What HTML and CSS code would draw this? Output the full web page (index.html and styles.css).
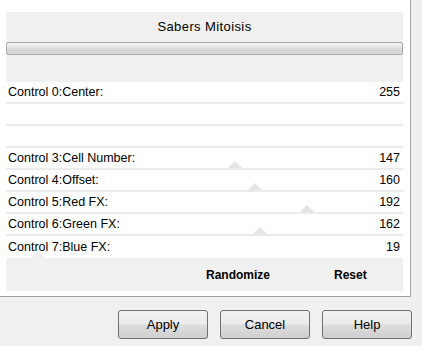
FILE: index.html
```html
<!DOCTYPE html>
<html>
<head>
<meta charset="utf-8">
<link rel="stylesheet" href="styles.css">
</head>
<body>
<div class="main">
  <div class="panel">
    <div class="header">
      <div class="title">Sabers Mitoisis</div>
      <div class="progress"></div>
    </div>
    <div class="rows">
      <div class="row"><span class="label">Control 0:Center:</span><span class="val">255</span></div>
      <div class="row"></div>
      <div class="row"></div>
      <div class="row"><span class="label">Control 3:Cell Number:</span><span class="val">147</span><i class="thumb" style="left:222px"></i></div>
      <div class="row"><span class="label">Control 4:Offset:</span><span class="val">160</span><i class="thumb" style="left:242px"></i></div>
      <div class="row"><span class="label">Control 5:Red FX:</span><span class="val">192</span><i class="thumb" style="left:294px"></i></div>
      <div class="row"><span class="label">Control 6:Green FX:</span><span class="val">162</span><i class="thumb" style="left:247px"></i></div>
      <div class="row last"><span class="label">Control 7:Blue FX:</span><span class="val">19</span><i class="thumb faint" style="left:25px"></i></div>
    </div>
    <div class="footer">
      <span class="fbtn">Randomize</span>
      <span class="fbtn">Reset</span>
    </div>
  </div>
</div>
<div class="buttons">
  <button class="btn">Apply</button>
  <button class="btn">Cancel</button>
  <button class="btn">Help</button>
</div>
</body>
</html>
```
FILE: styles.css
```css
html, body {
  margin: 0;
  padding: 0;
}
body {
  background: #f0f0f0;
  font-family: "Liberation Sans", Arial, sans-serif;
  font-size: 12px;
  color: #000;
  width: 422px;
  height: 346px;
  overflow: hidden;
}
.main {
  width: 411px;
  height: 297px;
  background: #fff;
  border-right: 1px solid #a0a0a0;
  border-bottom: 1px solid #a0a0a0;
  padding: 12px 0 0 6px;
  box-sizing: border-box;
}
.panel {
  width: 397px;
}
.header {
  background: #f0f0f0;
  height: 70px;
  padding-top: 7px;
  box-sizing: border-box;
}
.title {
  text-align: center;
  font-size: 13px;
  letter-spacing: 0.4px;
  height: 23px;
  line-height: 16px;
}
.progress {
  height: 13px;
  box-sizing: border-box;
  border: 1px solid #a8a8a8;
  border-radius: 2px;
  background: linear-gradient(#f6f6f6 0%, #e8e8e8 35%, #d4d4d4 60%, #dadada 100%);
}
.rows {
  display: flex;
  flex-direction: column;
}
.row {
  position: relative;
  height: 22px;
  box-sizing: border-box;
  border-bottom: 2px solid #ebebeb;
  display: flex;
  align-items: center;
  justify-content: space-between;
  padding: 0 3px 0 2px;
  font-size: 12.5px;
}
.row.last {
  border-bottom: none;
}
.label, .val {
  position: relative;
  z-index: 1;
}
.thumb {
  position: absolute;
  bottom: 0;
  width: 0;
  height: 0;
  border-left: 7px solid transparent;
  border-right: 7px solid transparent;
  border-bottom: 7px solid #e4e4e4;
}
.thumb.faint {
  border-bottom-color: #eeeeee;
}
.footer {
  background: #f0f0f0;
  height: 33px;
  display: flex;
  align-items: center;
  padding-left: 200px;
  gap: 64px;
  font-weight: bold;
  font-size: 12px;
}
.buttons {
  display: flex;
  justify-content: flex-end;
  gap: 12px;
  padding: 13px 10px 0 0;
}
.btn {
  width: 90px;
  height: 29px;
  border: 1px solid #707070;
  border-radius: 3px;
  background: linear-gradient(#f2f2f2 0%, #ebebeb 48%, #dddddd 52%, #cfcfcf 100%);
  font-family: "Liberation Sans", Arial, sans-serif;
  font-size: 13px;
  color: #000;
  padding: 0;
}
```
